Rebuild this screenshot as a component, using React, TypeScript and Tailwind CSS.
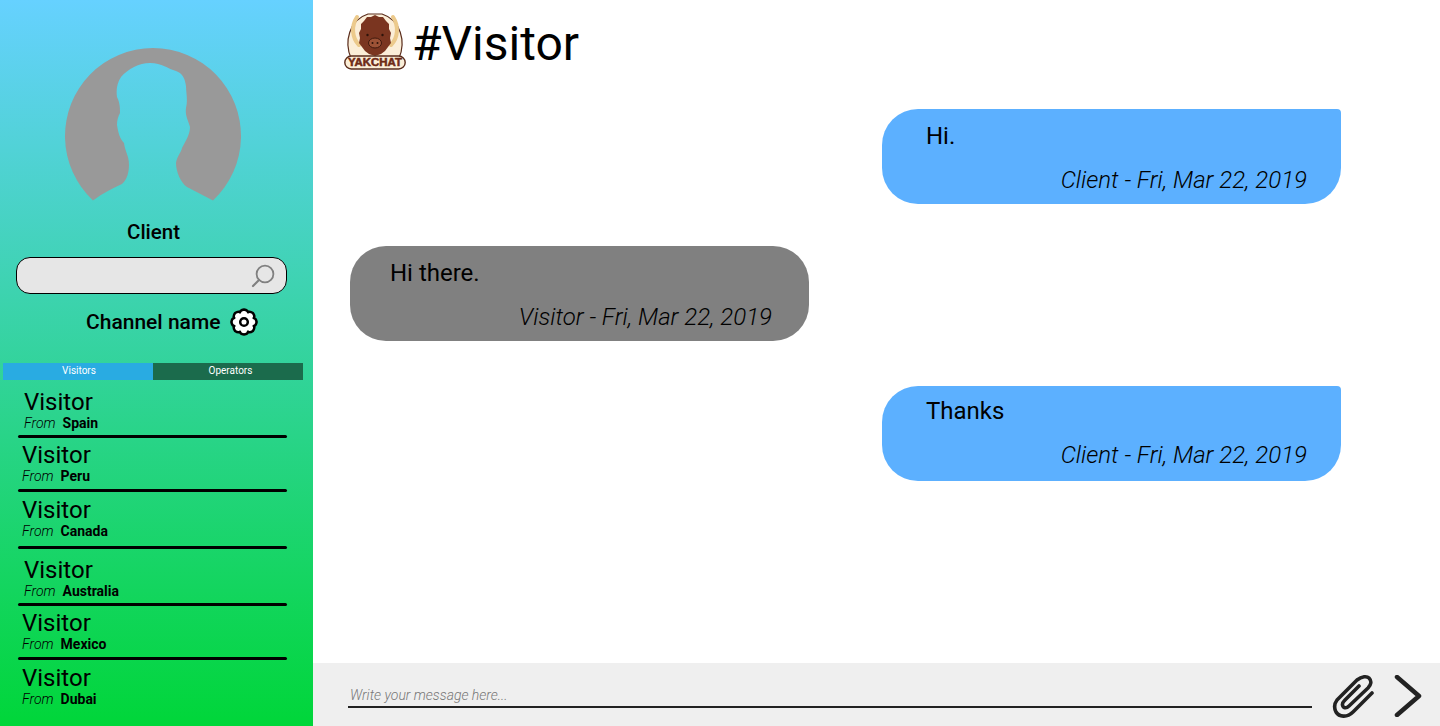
import React from 'react';

const VISITORS = [
  { country: 'Spain', indent: 'pl-[24px]', height: 'h-[58px]', top: 'pt-[9px]' },
  { country: 'Peru', indent: 'pl-[22px]', height: 'h-[54px]', top: 'pt-[4px]' },
  { country: 'Canada', indent: 'pl-[22px]', height: 'h-[57px]', top: 'pt-[5px]' },
  { country: 'Australia', indent: 'pl-[24px]', height: 'h-[57px]', top: 'pt-[8px]' },
  { country: 'Mexico', indent: 'pl-[22px]', height: 'h-[54px]', top: 'pt-[4px]' },
  { country: 'Dubai', indent: 'pl-[22px]', height: 'h-[54px]', top: 'pt-[5px]' },
];

const MESSAGES = [
  { text: 'Hi.', meta: 'Client - Fri, Mar 22, 2019', mine: true, gap: 'mt-[37px]', textTop: 'mt-[13px]' },
  { text: 'Hi there.', meta: 'Visitor - Fri, Mar 22, 2019', mine: false, gap: 'mt-[42px]', textTop: 'mt-[13px]' },
  { text: 'Thanks', meta: 'Client - Fri, Mar 22, 2019', mine: true, gap: 'mt-[45px]', textTop: 'mt-[11px]' },
];

// eight soft lobes round the centre of the cog
const gearPath = () => {
  const pts: string[] = [];
  for (let i = 0; i < 8; i++) {
    const a = (i * Math.PI) / 4 - Math.PI / 2;
    const v = a + Math.PI / 8;
    const next = a + Math.PI / 4;
    const p = (ang: number, r: number) => `${(14 + r * Math.cos(ang)).toFixed(2)} ${(14 + r * Math.sin(ang)).toFixed(2)}`;
    if (i === 0) pts.push(`M${p(a, 12.6)}`);
    pts.push(`Q${p(a + Math.PI / 10, 12.6)} ${p(v, 10.5)}`);
    pts.push(`Q${p(next - Math.PI / 10, 12.6)} ${p(next, 12.6)}`);
  }
  return pts.join(' ') + ' Z';
};

const Avatar = () => (
  <svg viewBox="65 48 176 153" className="w-[176px] h-[153px] ml-[65px] mt-[48px] block">
    <path
      fill="#999999"
      d="M93 200.400 A88 88 0 1 1 213 200.400 L187 187 C181 183 176 172 176 163 C177 156 181 153 182 148 C185 142 190 135 190 127 C188 120 185 116 186 108 C188 100 186 92 186 86 C185 78 182 73 176 71 C168 69 162 63 150 63 C139 63 128 69 121 77 C117 83 116 90 117 97 C120 103 120 108 120 113 C118 117 117 120 117 125 C118 132 120 139 124 143 C125 152 129 155 129 165 C129 172 127 180 122 184 C113 188 103 193 93 200.400 Z"
    />
  </svg>
);

const Logo = () => (
  <svg viewBox="0 0 62 58" className="w-[62px] h-[58px] shrink-0">
    <path d="M7 46 C0 30 5 8 24 2 L38 2 C57 8 62 30 55 46 Z" fill="#fbeed8" stroke="#5a2d1c" strokeWidth="1.200" />
    <path d="M13 5 C7 14 8 26 15 33 M49 5 C55 14 54 26 47 33" fill="none" stroke="#ecca8c" strokeWidth="4" strokeLinecap="round" />
    <path
      fill="#7a3520"
      d="M31 3 L35 5 L39 5 L42 9 L45 12 L45 17 L47 21 L46 26 L47 31 L44 35 L41 39 L37 42 L31 44 L25 42 L21 39 L18 35 L15 31 L16 26 L15 21 L17 17 L17 12 L20 9 L23 5 L27 5 Z"
    />
    <ellipse cx="31" cy="31" rx="6.500" ry="5" fill="#9c5236" stroke="#40190d" strokeWidth="1" />
    <circle cx="28.500" cy="31" r="1" fill="#2d130a" />
    <circle cx="33.500" cy="31" r="1" fill="#2d130a" />
    <circle cx="23.500" cy="23" r="1.200" fill="#2d130a" />
    <circle cx="38.500" cy="23" r="1.200" fill="#2d130a" />
    <rect x="0.800" y="44" width="60.400" height="13" rx="6.500" fill="#fbeed8" stroke="#5a2d1c" strokeWidth="1.400" />
    <text
      x="31"
      y="54"
      textAnchor="middle"
      textLength="54"
      lengthAdjust="spacingAndGlyphs"
      fontFamily="'Liberation Sans', sans-serif"
      fontWeight="700"
      fontSize="10"
      fill="#6e2a16"
      stroke="#6e2a16"
      strokeWidth="0.500"
    >
      YAKCHAT
    </text>
  </svg>
);

const SearchIcon = () => (
  <svg viewBox="0 0 24 24" fill="none" stroke="#808080" strokeWidth="1.800" strokeLinecap="round" className="w-[24px] h-[24px]">
    <circle cx="14" cy="10" r="8.400" />
    <path d="M8 16 L2 22" strokeWidth="2.200" />
  </svg>
);

const GearIcon = () => (
  <svg viewBox="0 0 28 28" className="w-[28px] h-[28px]">
    <path fill="#ffffff" stroke="#000000" strokeWidth="2.500" strokeLinejoin="round" d={gearPath()} />
    <circle cx="14" cy="14" r="3.800" fill="#ffffff" stroke="#000000" strokeWidth="2.500" />
  </svg>
);

const ClipIcon = () => (
  <svg viewBox="0 0 44 44" fill="none" stroke="#222222" strokeWidth="3.600" strokeLinecap="round" strokeLinejoin="round" className="w-[44px] h-[44px]">
    <path d="M40 19 L21 38 C15 44 7 43 4 38 C2 34 2 30 5 26 L25 6 C30 2 35 2 37 4 C40 7 39 11 36 14 L17 32 C14 35 11 34 10.500 31 C10 29 11 28 13 26 L27 12" />
  </svg>
);

const SendIcon = () => (
  <svg viewBox="0 0 28 42" fill="none" stroke="#222222" strokeWidth="4.500" strokeLinecap="round" strokeLinejoin="round" className="w-[28px] h-[42px]">
    <path d="M3 2 L25 21 L3 40" />
  </svg>
);

const Bubble = ({ text, meta, mine, gap, textTop }: (typeof MESSAGES)[number]) => (
  <div
    className={`w-[459px] h-[95px] flex flex-col ${gap} ${
      mine
        ? 'ml-[569px] bg-[#5cb0ff] rounded-tl-[36px] rounded-bl-[36px] rounded-br-[36px] rounded-tr-[4px] pl-[44px] pr-[34px]'
        : 'ml-[37px] bg-[#808080] rounded-[36px] pl-[40px] pr-[37px]'
    }`}
  >
    <p className={`text-[24px] leading-[28px] ${textTop} text-black`}>{text}</p>
    <p className="text-[24px] leading-[28px] mt-[16px] text-right italic font-light text-black">{meta}</p>
  </div>
);

export default function App() {
  return (
    <div className="w-[1440px] h-[726px] flex overflow-hidden bg-white text-black font-['Roboto',sans-serif]">
      <aside className="w-[313px] h-full shrink-0 bg-linear-to-b/srgb from-[#66d1ff] to-[#00d639] flex flex-col">
        <Avatar />
        <p className="mt-[19px] ml-[127px] text-[20.500px] leading-[24px] font-medium">Client</p>

        <div className="mt-[13px] ml-[16px] w-[271px] h-[37px] rounded-[14px] border border-black bg-[#e6e6e6] flex items-center justify-end pr-[11px]">
          <SearchIcon />
        </div>

        <div className="mt-[13px] ml-[86px] h-[30px] flex items-center gap-[10px]">
          <span className="text-[21px] leading-[24px] font-medium">Channel name</span>
          <GearIcon />
        </div>

        <div className="mt-[26px] ml-[3px] w-[300px] h-[17px] flex text-[10px] leading-[15px] text-white text-center">
          <div className="w-[150px] pl-[2px] bg-[#29abe2]">Visitors</div>
          <div className="w-[150px] pl-[5px] bg-[#1b6b4c]">Operators</div>
        </div>

        <ul>
          {VISITORS.map(({ country, indent, height, top }, i) => (
            <li key={country} className={`${height} ${top} ${indent} relative`}>
              <p className="text-[24px] leading-[26px]">Visitor</p>
              <p className="text-[14px] leading-[16px] flex gap-[7px]">
                <span className="italic font-light">From</span>
                <span className="font-bold">{country}</span>
              </p>
              {i < VISITORS.length - 1 && (
                <div className="absolute left-[18px] bottom-[0.500px] w-[269px] h-[2.500px] rounded-full bg-black" />
              )}
            </li>
          ))}
        </ul>
      </aside>

      <main className="flex-1 h-full flex flex-col">
        <header className="h-[72px] flex items-start pl-[31px] pt-[12px] gap-[8px]">
          <Logo />
          <h1 className="text-[48px] leading-[64px] -ml-[2px]">#Visitor</h1>
        </header>

        <section className="flex-1">
          {MESSAGES.map((m) => (
            <Bubble key={m.text} {...m} />
          ))}
        </section>

        <footer className="h-[63px] bg-[#efefef] flex items-center pl-[35px]">
          <div className="w-[964px] h-[29px] -mt-[2px] border-b-2 border-[#222222] text-[14px] leading-[22px] pt-[5px] pl-[2px] italic font-light text-[#777777]">
            Write your message here...
          </div>
          <div className="ml-[20px] mt-[3px]">
            <ClipIcon />
          </div>
          <div className="ml-[18px] mt-[3px]">
            <SendIcon />
          </div>
        </footer>
      </main>
    </div>
  );
}
